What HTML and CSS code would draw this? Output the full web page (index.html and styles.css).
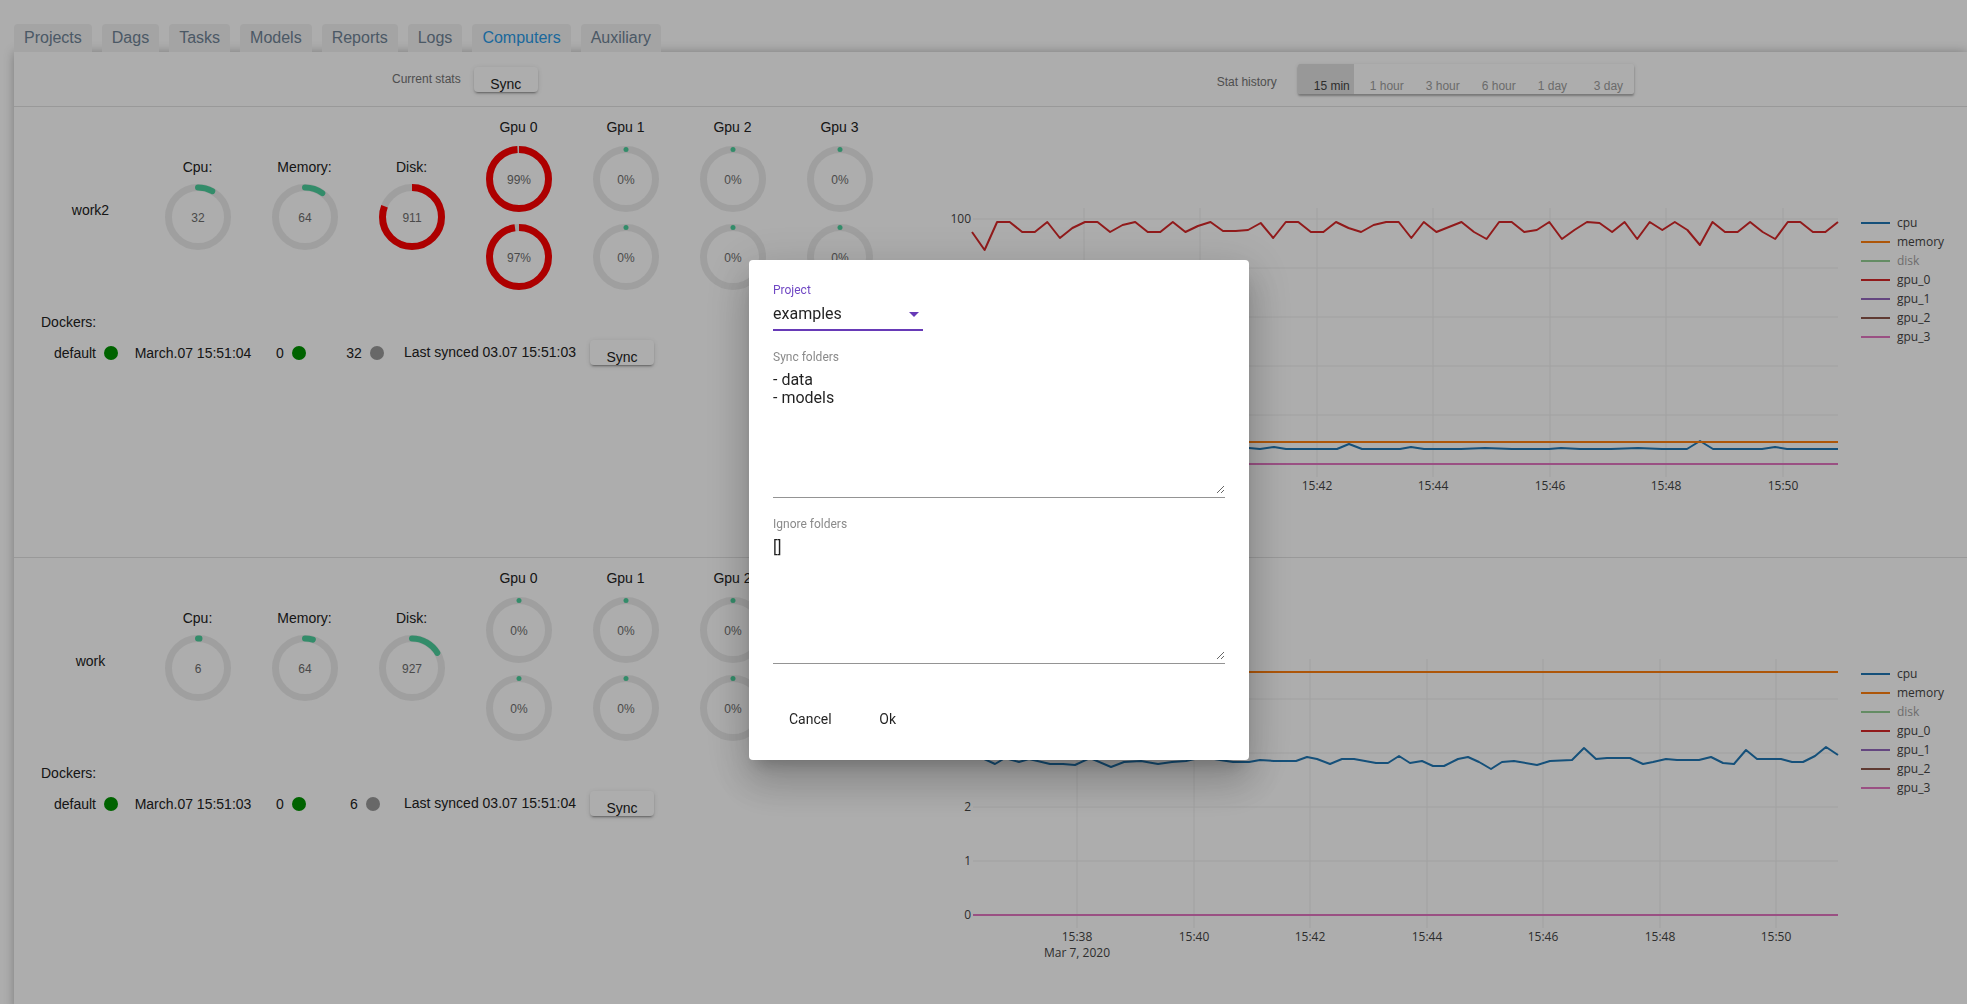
FILE: index.html
```html
<!DOCTYPE html>
<html>
<head>
<meta charset="utf-8">
<link rel="stylesheet" href="styles.css">
</head>
<body>
<nav class="tabs">
  <a class="tab">Projects</a>
  <a class="tab">Dags</a>
  <a class="tab">Tasks</a>
  <a class="tab">Models</a>
  <a class="tab">Reports</a>
  <a class="tab">Logs</a>
  <a class="tab active">Computers</a>
  <a class="tab">Auxiliary</a>
</nav>

<section class="panel">
  <header class="panel-head">
    <span class="head-label cur">Current stats</span>
    <button class="raised head-sync">Sync</button>
    <span class="head-label hist">Stat history</span>
    <div class="toggle-group">
      <span class="toggle checked">15 min</span>
      <span class="toggle">1 hour</span>
      <span class="toggle">3 hour</span>
      <span class="toggle">6 hour</span>
      <span class="toggle">1 day</span>
      <span class="toggle">3 day</span>
    </div>
  </header>

  <!-- computer work2 -->
  <div class="comp-row">
    <div class="comp-left">
      <div class="stats">
        <div class="col name">work2</div>
        <div class="col metric"><div class="lbl">Cpu:</div>
          <svg class="ring" viewBox="0 0 66 66"><circle class="trk" cx="33" cy="33" r="29.5"/><circle class="arc g" cx="33" cy="33" r="29.5" stroke-dasharray="14.9 400" transform="rotate(-90 33 33)"/><text class="rv" x="33" y="37.5">32</text></svg>
        </div>
        <div class="col metric"><div class="lbl">Memory:</div>
          <svg class="ring" viewBox="0 0 66 66"><circle class="trk" cx="33" cy="33" r="29.5"/><circle class="arc g" cx="33" cy="33" r="29.5" stroke-dasharray="18.5 400" transform="rotate(-90 33 33)"/><text class="rv" x="33" y="37.5">64</text></svg>
        </div>
        <div class="col metric"><div class="lbl">Disk:</div>
          <svg class="ring" viewBox="0 0 66 66"><circle class="trk" cx="33" cy="33" r="29.5"/><circle class="arc r" cx="33" cy="33" r="29.5" stroke-dasharray="149.8 400" transform="rotate(-90 33 33)"/><text class="rv" x="33" y="37.5">911</text></svg>
        </div>
        <div class="col gpu"><div class="lbl">Gpu 0</div>
          <svg class="ring" viewBox="0 0 66 66"><circle class="trk" cx="33" cy="33" r="29.5"/><circle class="arc r" cx="33" cy="33" r="29.5" stroke-dasharray="183.5 400" transform="rotate(-90 33 33)"/><text class="rv" x="33" y="37.5">99%</text></svg>
          <svg class="ring second" viewBox="0 0 66 66"><circle class="trk" cx="33" cy="33" r="29.5"/><circle class="arc r" cx="33" cy="33" r="29.5" stroke-dasharray="181 400" transform="rotate(-90 33 33)"/><text class="rv" x="33" y="37.5">97%</text></svg>
        </div>
        <div class="col gpu"><div class="lbl">Gpu 1</div>
          <svg class="ring" viewBox="0 0 66 66"><circle class="trk" cx="33" cy="33" r="29.5"/><circle class="dot0" cx="33" cy="3.5" r="2.5"/><text class="rv" x="33" y="37.5">0%</text></svg>
          <svg class="ring second" viewBox="0 0 66 66"><circle class="trk" cx="33" cy="33" r="29.5"/><circle class="dot0" cx="33" cy="3.5" r="2.5"/><text class="rv" x="33" y="37.5">0%</text></svg>
        </div>
        <div class="col gpu"><div class="lbl">Gpu 2</div>
          <svg class="ring" viewBox="0 0 66 66"><circle class="trk" cx="33" cy="33" r="29.5"/><circle class="dot0" cx="33" cy="3.5" r="2.5"/><text class="rv" x="33" y="37.5">0%</text></svg>
          <svg class="ring second" viewBox="0 0 66 66"><circle class="trk" cx="33" cy="33" r="29.5"/><circle class="dot0" cx="33" cy="3.5" r="2.5"/><text class="rv" x="33" y="37.5">0%</text></svg>
        </div>
        <div class="col gpu"><div class="lbl">Gpu 3</div>
          <svg class="ring" viewBox="0 0 66 66"><circle class="trk" cx="33" cy="33" r="29.5"/><circle class="dot0" cx="33" cy="3.5" r="2.5"/><text class="rv" x="33" y="37.5">0%</text></svg>
          <svg class="ring second" viewBox="0 0 66 66"><circle class="trk" cx="33" cy="33" r="29.5"/><circle class="dot0" cx="33" cy="3.5" r="2.5"/><text class="rv" x="33" y="37.5">0%</text></svg>
        </div>
      </div>
      <div class="dockers-title">Dockers:</div>
      <div class="docker-row">
        <div class="cell c1">default <span class="dot ok"></span></div>
        <div class="cell c2">March.07 15:51:04</div>
        <div class="cell c3">0 <span class="dot ok"></span></div>
        <div class="cell c4">32 <span class="dot idle"></span></div>
        <div class="cell c5 synced">Last synced 03.07 15:51:03</div>
        <div class="cell c6"><button class="raised row-sync">Sync</button></div>
      </div>
    </div>

    <svg class="chart" width="1037" height="320" viewBox="0 0 1037 320">
      <g class="grid">
        <line x1="154" y1="11" x2="154" y2="280"/><line x1="270" y1="11" x2="270" y2="280"/><line x1="387" y1="11" x2="387" y2="280"/><line x1="503" y1="11" x2="503" y2="280"/><line x1="620" y1="11" x2="620" y2="280"/><line x1="736" y1="11" x2="736" y2="280"/><line x1="853" y1="11" x2="853" y2="280"/>
        <line x1="43" y1="22" x2="908" y2="22"/><line x1="43" y1="71" x2="908" y2="71"/><line x1="43" y1="120" x2="908" y2="120"/><line x1="43" y1="169" x2="908" y2="169"/><line x1="43" y1="218" x2="908" y2="218"/><line x1="43" y1="267" x2="908" y2="267"/>
      </g>
      <g class="yt">
        <text x="41" y="26">100</text><text x="41" y="75">80</text><text x="41" y="124">60</text><text x="41" y="173">40</text><text x="41" y="222">20</text><text x="41" y="271">0</text>
      </g>
      <g class="xt">
        <text x="154" y="293">15:38</text><text x="270" y="293">15:40</text><text x="387" y="293">15:42</text><text x="503" y="293">15:44</text><text x="620" y="293">15:46</text><text x="736" y="293">15:48</text><text x="853" y="293">15:50</text>
        <text x="154" y="309">Mar 7, 2020</text>
      </g>
      <g class="traces">
        <polyline class="t-cpu" points="43,252 100,252 150,251 200,252 250,252 300,251 319,251 330,252 344,250 356,252 378,252 395,252 407,252 419,247 432,252 470,252 481,250 494,252 531,252 555,251 582,252 619,252 631,251 650,252 681,252 708,251 732,252 757,252 770,244 783,252 806,252 832,252 845,250 857,252 881,252 908,252"/>
        <polyline class="t-mem" points="43,245 908,245"/>
        <polyline class="t-g0" points="42,35 54.6,53 67.1,25 79.7,25 92.2,35 104.8,35 117.3,25 129.9,41 142.4,31 155,25 167.5,25 180.1,35 192.6,28 205.2,25 217.7,35 230.3,35 242.8,25 255.4,35 267.9,29 280.5,25 293,34 305.6,34 318.1,33 330.7,26 343.2,41 355.8,25 368.3,25 380.9,35 393.4,35 406,25 418.5,31 431.1,35 443.6,28 456.2,25 468.7,25 481.3,41 493.8,25 506.4,35 518.9,30 531.5,25 544,35 556.6,42 569.1,25 581.7,25 594.2,35 606.8,33 619.3,25 631.9,42 644.4,33 657,25 669.5,26 682.1,35 694.6,25 707.2,42 719.7,25 732.3,33 744.8,25 757.4,33 769.9,48 782.5,25 795,35 807.6,35 820.1,25 832.7,35 845.2,42 857.8,25 870.3,25 882.9,35 895.4,35 908,25"/>
        <polyline class="t-g1" points="43,267 908,267"/>
        <polyline class="t-g2" points="43,267 908,267"/>
        <polyline class="t-g3" points="43,267 908,267"/>
      </g>
      <g class="legend">
        <line class="t-cpu" x1="931" y1="26" x2="960" y2="26"/><text x="967" y="30">cpu</text>
        <line class="t-mem" x1="931" y1="45" x2="960" y2="45"/><text x="967" y="49">memory</text>
        <g class="off"><line class="t-disk" x1="931" y1="64" x2="960" y2="64"/><text x="967" y="68">disk</text></g>
        <line class="t-g0" x1="931" y1="83" x2="960" y2="83"/><text x="967" y="87">gpu_0</text>
        <line class="t-g1" x1="931" y1="102" x2="960" y2="102"/><text x="967" y="106">gpu_1</text>
        <line class="t-g2" x1="931" y1="121" x2="960" y2="121"/><text x="967" y="125">gpu_2</text>
        <line class="t-g3" x1="931" y1="140" x2="960" y2="140"/><text x="967" y="144">gpu_3</text>
      </g>
    </svg>
  </div>

  <!-- computer work -->
  <div class="comp-row last">
    <div class="comp-left">
      <div class="stats">
        <div class="col name">work</div>
        <div class="col metric"><div class="lbl">Cpu:</div>
          <svg class="ring" viewBox="0 0 66 66"><circle class="trk" cx="33" cy="33" r="29.5"/><circle class="arc g" cx="33" cy="33" r="29.5" stroke-dasharray="1.5 400" transform="rotate(-90 33 33)"/><text class="rv" x="33" y="37.5">6</text></svg>
        </div>
        <div class="col metric"><div class="lbl">Memory:</div>
          <svg class="ring" viewBox="0 0 66 66"><circle class="trk" cx="33" cy="33" r="29.5"/><circle class="arc g" cx="33" cy="33" r="29.5" stroke-dasharray="8 400" transform="rotate(-90 33 33)"/><text class="rv" x="33" y="37.5">64</text></svg>
        </div>
        <div class="col metric"><div class="lbl">Disk:</div>
          <svg class="ring" viewBox="0 0 66 66"><circle class="trk" cx="33" cy="33" r="29.5"/><circle class="arc g" cx="33" cy="33" r="29.5" stroke-dasharray="30.4 400" transform="rotate(-90 33 33)"/><text class="rv" x="33" y="37.5">927</text></svg>
        </div>
        <div class="col gpu"><div class="lbl">Gpu 0</div>
          <svg class="ring" viewBox="0 0 66 66"><circle class="trk" cx="33" cy="33" r="29.5"/><circle class="dot0" cx="33" cy="3.5" r="2.5"/><text class="rv" x="33" y="37.5">0%</text></svg>
          <svg class="ring second" viewBox="0 0 66 66"><circle class="trk" cx="33" cy="33" r="29.5"/><circle class="dot0" cx="33" cy="3.5" r="2.5"/><text class="rv" x="33" y="37.5">0%</text></svg>
        </div>
        <div class="col gpu"><div class="lbl">Gpu 1</div>
          <svg class="ring" viewBox="0 0 66 66"><circle class="trk" cx="33" cy="33" r="29.5"/><circle class="dot0" cx="33" cy="3.5" r="2.5"/><text class="rv" x="33" y="37.5">0%</text></svg>
          <svg class="ring second" viewBox="0 0 66 66"><circle class="trk" cx="33" cy="33" r="29.5"/><circle class="dot0" cx="33" cy="3.5" r="2.5"/><text class="rv" x="33" y="37.5">0%</text></svg>
        </div>
        <div class="col gpu"><div class="lbl">Gpu 2</div>
          <svg class="ring" viewBox="0 0 66 66"><circle class="trk" cx="33" cy="33" r="29.5"/><circle class="dot0" cx="33" cy="3.5" r="2.5"/><text class="rv" x="33" y="37.5">0%</text></svg>
          <svg class="ring second" viewBox="0 0 66 66"><circle class="trk" cx="33" cy="33" r="29.5"/><circle class="dot0" cx="33" cy="3.5" r="2.5"/><text class="rv" x="33" y="37.5">0%</text></svg>
        </div>
        <div class="col gpu"><div class="lbl">Gpu 3</div>
          <svg class="ring" viewBox="0 0 66 66"><circle class="trk" cx="33" cy="33" r="29.5"/><circle class="dot0" cx="33" cy="3.5" r="2.5"/><text class="rv" x="33" y="37.5">0%</text></svg>
          <svg class="ring second" viewBox="0 0 66 66"><circle class="trk" cx="33" cy="33" r="29.5"/><circle class="dot0" cx="33" cy="3.5" r="2.5"/><text class="rv" x="33" y="37.5">0%</text></svg>
        </div>
      </div>
      <div class="dockers-title">Dockers:</div>
      <div class="docker-row">
        <div class="cell c1">default <span class="dot ok"></span></div>
        <div class="cell c2">March.07 15:51:03</div>
        <div class="cell c3">0 <span class="dot ok"></span></div>
        <div class="cell c4">6 <span class="dot idle"></span></div>
        <div class="cell c5 synced">Last synced 03.07 15:51:04</div>
        <div class="cell c6"><button class="raised row-sync">Sync</button></div>
      </div>
    </div>

    <svg class="chart" width="1037" height="320" viewBox="0 0 1037 320">
      <g class="grid">
        <line x1="147" y1="11" x2="147" y2="280"/><line x1="264" y1="11" x2="264" y2="280"/><line x1="380" y1="11" x2="380" y2="280"/><line x1="497" y1="11" x2="497" y2="280"/><line x1="613" y1="11" x2="613" y2="280"/><line x1="730" y1="11" x2="730" y2="280"/><line x1="846" y1="11" x2="846" y2="280"/>
        <line x1="43" y1="51" x2="908" y2="51"/><line x1="43" y1="105" x2="908" y2="105"/><line x1="43" y1="159" x2="908" y2="159"/><line x1="43" y1="213" x2="908" y2="213"/><line x1="43" y1="267" x2="908" y2="267"/>
      </g>
      <g class="yt">
        <text x="41" y="55">4</text><text x="41" y="109">3</text><text x="41" y="163">2</text><text x="41" y="217">1</text><text x="41" y="271">0</text>
      </g>
      <g class="xt">
        <text x="147" y="293">15:38</text><text x="264" y="293">15:40</text><text x="380" y="293">15:42</text><text x="497" y="293">15:44</text><text x="613" y="293">15:46</text><text x="730" y="293">15:48</text><text x="846" y="293">15:50</text>
        <text x="147" y="309">Mar 7, 2020</text>
      </g>
      <g class="traces">
        <polyline class="t-cpu" points="43,108 52,110 65,116 75,110 89,114 99,111 120,116 133,116 145,117 160,110 181,119 194,114 211,113 228,116 242,114 256,113 273,109 290,112 303,114 319,114 330,112 344,113 366,113 377,109 387,111 400,116 412,111 424,111 446,115 458,115 469,108 480,115 492,113 503,118 514,118 528,111 538,109 549,114 561,121 572,114 584,113 607,117 620,113 642,112 654,100 666,111 677,110 700,110 713,116 723,114 736,111 747,112 769,112 781,109 793,115 804,116 816,102 827,111 851,111 862,114 873,114 885,108 896,99 908,107"/>
        <polyline class="t-mem" points="43,24 908,24"/>
        <polyline class="t-g0" points="43,267 908,267"/>
        <polyline class="t-g1" points="43,267 908,267"/>
        <polyline class="t-g2" points="43,267 908,267"/>
        <polyline class="t-g3" points="43,267 908,267"/>
      </g>
      <g class="legend">
        <line class="t-cpu" x1="931" y1="26" x2="960" y2="26"/><text x="967" y="30">cpu</text>
        <line class="t-mem" x1="931" y1="45" x2="960" y2="45"/><text x="967" y="49">memory</text>
        <g class="off"><line class="t-disk" x1="931" y1="64" x2="960" y2="64"/><text x="967" y="68">disk</text></g>
        <line class="t-g0" x1="931" y1="83" x2="960" y2="83"/><text x="967" y="87">gpu_0</text>
        <line class="t-g1" x1="931" y1="102" x2="960" y2="102"/><text x="967" y="106">gpu_1</text>
        <line class="t-g2" x1="931" y1="121" x2="960" y2="121"/><text x="967" y="125">gpu_2</text>
        <line class="t-g3" x1="931" y1="140" x2="960" y2="140"/><text x="967" y="144">gpu_3</text>
      </g>
    </svg>
  </div>
</section>

<div class="backdrop"></div>

<div class="dialog">
  <div class="proj-label">Project</div>
  <div class="select">
    <span class="select-value">examples</span>
    <span class="select-arrow"></span>
  </div>
  <div class="field-label">Sync folders</div>
  <div class="ta-wrap"><textarea class="ta ta1" readonly>- data
- models</textarea></div>
  <div class="field-label">Ignore folders</div>
  <div class="ta-wrap"><textarea class="ta ta2" readonly>[]</textarea></div>
  <div class="actions">
    <button class="flat">Cancel</button>
    <button class="flat">Ok</button>
  </div>
</div>
</body>
</html>
```

FILE: styles.css
```css
html, body {
  margin: 0;
  padding: 0;
  overflow: hidden;
  background: #ffffff;
}
body {
  font-family: "Liberation Sans", Arial, sans-serif;
  font-size: 14px;
  color: #222222;
  width: 1967px;
  height: 1004px;
}

/* tabs */
.tabs {
  display: flex;
  gap: 10px;
  padding: 24px 0 0 14px;
  height: 28px;
}
.tab {
  height: 28px;
  line-height: 28px;
  padding: 0 10px;
  background: #f2f2f2;
  border-radius: 4px 4px 0 0;
  color: #6f8396;
  font-size: 16px;
}
.tab.active {
  color: #2a9ae6;
}

/* panel */
.panel {
  margin-left: 14px;
  min-height: 960px;
  background: #ffffff;
  box-shadow: 0 0 10px rgba(0, 0, 0, 0.28);
}
.panel-head {
  display: flex;
  align-items: center;
  height: 55px;
  border-bottom: 1px solid #e2e2e2;
  box-sizing: border-box;
}
.head-label {
  font-size: 12px;
  color: #747474;
}
.cur {
  margin-left: 378px;
}
.hist {
  margin-left: 679px;
  margin-top: 5px;
}
.raised {
  font-family: "Liberation Sans", Arial, sans-serif;
  font-size: 14px;
  color: #222222;
  background: #ffffff;
  border: none;
  border-radius: 4px;
  box-shadow: 0 3px 1px -2px rgba(0,0,0,.2), 0 2px 2px 0 rgba(0,0,0,.14), 0 1px 5px 0 rgba(0,0,0,.12);
  width: 64px;
  height: 25px;
  padding: 8px 0 0 0;
  line-height: 16px;
  box-sizing: border-box;
  text-align: center;
}
.head-sync {
  align-self: flex-start;
  margin-top: 15px;
  margin-left: 13px;
}
.toggle-group {
  align-self: flex-start;
  margin-top: 12px;
  margin-left: 21px;
  display: flex;
  height: 30px;
  background: #ffffff;
  box-shadow: 0 2px 2px rgba(0,0,0,.25), 0 1px 4px rgba(0,0,0,.12);
  border-radius: 2px;
  overflow: hidden;
}
.toggle {
  width: 56px;
  height: 30px;
  box-sizing: border-box;
  padding: 16px 0 0 16px;
  font-size: 12px;
  line-height: 13px;
  color: #9e9e9e;
  white-space: nowrap;
}
.toggle.checked {
  background: #e0e0e0;
  color: #444444;
}

/* computer rows */
.comp-row {
  display: flex;
  align-items: flex-start;
  height: 451px;
  border-bottom: 1px solid #e2e2e2;
  box-sizing: border-box;
}
.comp-row.last {
  border-bottom: none;
}
.comp-left {
  width: 916px;
  flex: none;
  padding-top: 12px;
}
.stats {
  display: flex;
  align-items: center;
  height: 171px;
  margin-left: 23px;
}
.col {
  width: 107px;
  flex: none;
  text-align: center;
}
.col.name {
  padding-top: 11px;
}
.lbl {
  line-height: 16px;
}
.metric .lbl {
  margin-bottom: 9px;
}
.gpu .lbl {
  margin-bottom: 11px;
}
.ring {
  display: block;
  width: 66px;
  height: 66px;
  margin: 0 auto;
}
.ring.second {
  margin-top: 12px;
}
.trk {
  fill: none;
  stroke: #ebebeb;
  stroke-width: 7;
}
.arc {
  fill: none;
}
.arc.g {
  stroke: #4ccf9c;
  stroke-width: 6;
  stroke-linecap: round;
}
.arc.r {
  stroke: #ff0000;
  stroke-width: 7;
}
.dot0 {
  fill: #4ccf9c;
}
.rv {
  font-family: "Liberation Sans", Arial, sans-serif;
  font-size: 12px;
  fill: #6e6e6e;
  text-anchor: middle;
}

.dockers-title {
  margin-top: 24px;
  margin-left: 27px;
  line-height: 16px;
}
.docker-row {
  display: flex;
  align-items: center;
  height: 25px;
  margin-top: 10px;
  margin-left: 26px;
}
.cell {
  display: flex;
  align-items: center;
  justify-content: center;
  gap: 8px;
  flex: none;
  white-space: nowrap;
}
.c1 { width: 92px; }
.c2 { width: 122px; }
.c3 { width: 74px; }
.c4 { width: 74px; }
.c5 { width: 176px; }
.c6 { width: 88px; }
.synced {
  margin-top: -2px;
}
.dot {
  display: inline-block;
  width: 14px;
  height: 14px;
  border-radius: 50%;
}
.dot.ok {
  background: #009300;
}
.dot.idle {
  background: #9a9a9a;
}

/* charts (plotly style) */
.chart {
  flex: none;
  display: block;
  margin-top: 90px;
}
.grid line {
  stroke: #eeeeee;
  stroke-width: 1;
}
.yt text, .xt text, .legend text {
  font-family: "Open Sans", "Liberation Sans", sans-serif;
  font-size: 12px;
  fill: #444444;
}
.yt text {
  text-anchor: end;
}
.xt text {
  text-anchor: middle;
}
.traces polyline, .legend line {
  fill: none;
  stroke-width: 2;
  stroke-linejoin: round;
}
.t-cpu { stroke: #1f77b4; }
.t-mem { stroke: #ff7f0e; }
.t-disk { stroke: #2ca02c; }
.t-g0 { stroke: #d62728; }
.t-g1 { stroke: #9467bd; }
.t-g2 { stroke: #8c564b; }
.t-g3 { stroke: #e377c2; }
.legend .off {
  opacity: 0.5;
}

/* dialog */
.backdrop {
  position: fixed;
  inset: 0;
  background: rgba(0, 0, 0, 0.32);
}
.dialog {
  position: fixed;
  left: 749px;
  top: 260px;
  width: 500px;
  height: 500px;
  box-sizing: border-box;
  padding: 23px 24px 0 24px;
  background: #ffffff;
  border-radius: 4px;
  box-shadow: 0 11px 15px -7px rgba(0,0,0,.2), 0 24px 38px 3px rgba(0,0,0,.14), 0 9px 46px 8px rgba(0,0,0,.12);
  font-family: Roboto, "Liberation Sans", sans-serif;
  color: rgba(0, 0, 0, 0.87);
}
.proj-label {
  font-size: 12px;
  line-height: 14px;
  color: #7048c4;
}
.select {
  display: flex;
  align-items: center;
  justify-content: space-between;
  width: 150px;
  margin-top: 7px;
  padding-bottom: 5px;
  border-bottom: 2px solid #673ab7;
  font-size: 16px;
  line-height: 20px;
}
.select-arrow {
  width: 0;
  height: 0;
  border-left: 5px solid transparent;
  border-right: 5px solid transparent;
  border-top: 5px solid #673ab7;
  margin-right: 4px;
}
.field-label {
  margin-top: 19px;
  font-size: 12px;
  line-height: 14px;
  color: #8a8a8a;
}
.ta-wrap {
  padding-bottom: 3px;
  border-bottom: 1px solid #949494;
}
.ta {
  display: block;
  width: 100%;
  box-sizing: border-box;
  border: none;
  outline: none;
  padding: 0;
  margin: 0;
  font-family: Roboto, "Liberation Sans", sans-serif;
  font-size: 16px;
  line-height: 18px;
  color: rgba(0, 0, 0, 0.87);
  resize: vertical;
  background: transparent;
}
.ta1 {
  margin-top: 7px;
  height: 123px;
}
.ta2 {
  margin-top: 8px;
  height: 121px;
}
.actions {
  display: flex;
  gap: 8px;
  margin-top: 37px;
}
.flat {
  height: 36px;
  min-width: 64px;
  padding: 0 16px;
  border: none;
  background: transparent;
  font-family: Roboto, "Liberation Sans", sans-serif;
  font-size: 14px;
  color: rgba(0, 0, 0, 0.87);
  border-radius: 4px;
}
```
